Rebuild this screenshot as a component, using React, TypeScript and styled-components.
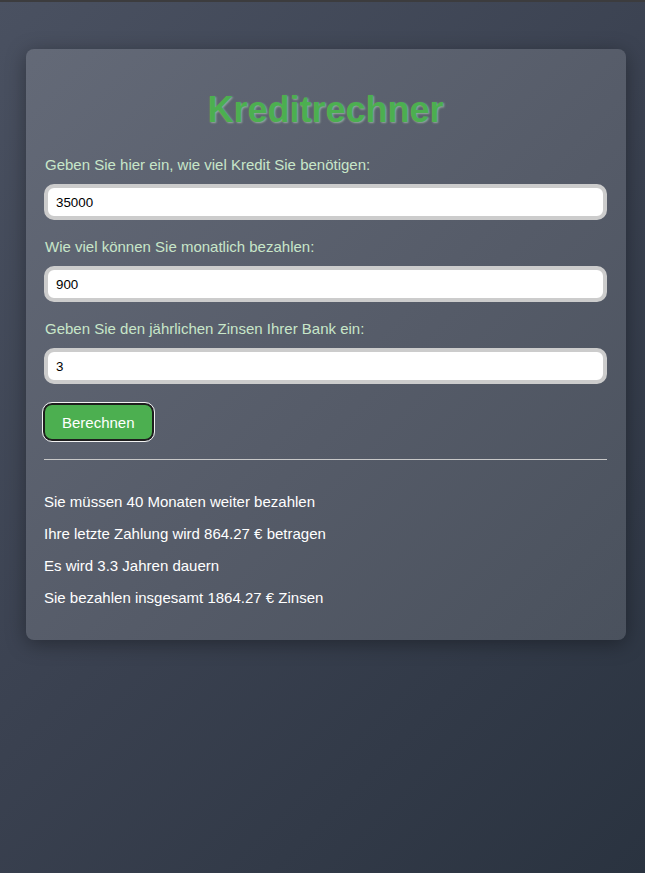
import React from "react";
import styled, { createGlobalStyle } from "styled-components";

const GlobalStyle = createGlobalStyle`
  html, body {
    margin: 0;
    padding: 0;
    height: 100%;
  }
  body {
    font-family: "Liberation Sans", Arial, sans-serif;
    background: linear-gradient(135deg, #4a5161 0%, #3a4150 50%, #2a3340 100%);
    background-attachment: fixed;
    min-height: 873px;
  }
`;

const Page = styled.div`
  box-sizing: border-box;
  min-height: 873px;
  border-top: 2px solid #3c3c3e;
  padding: 47px 19px 40px 26px;
`;

const Card = styled.div`
  box-sizing: border-box;
  width: 600px;
  padding: 0 19px 34px 18px;
  border-radius: 8px;
  background: linear-gradient(135deg, rgba(255, 255, 255, 0.15), rgba(255, 255, 255, 0.13));
  box-shadow: 0 4px 20px rgba(0, 0, 0, 0.35);
  display: flex;
  flex-direction: column;
`;

const Title = styled.h1`
  margin: 41px 0 26px;
  text-align: center;
  font-size: 36px;
  line-height: 40px;
  font-weight: bold;
  color: #4caf50;
  text-shadow: 1px 1px 2px rgba(200, 235, 200, 0.55);
`;

const Field = styled.div`
  display: flex;
  flex-direction: column;
  gap: 11px;
  margin-bottom: 18px;
`;

const Label = styled.label`
  font-size: 15px;
  line-height: 17px;
  color: #c8e6c9;
  padding-left: 1px;
`;

const Input = styled.input`
  box-sizing: border-box;
  width: 100%;
  height: 36px;
  padding: 0 8px;
  border: 4px solid #cccccc;
  border-radius: 10px;
  background: #ffffff;
  font-family: "Liberation Sans", Arial, sans-serif;
  font-size: 13.33px;
  color: #000;
  outline: none;
`;

const Button = styled.button`
  align-self: flex-start;
  box-sizing: border-box;
  height: 38px;
  margin: 1px 0 0 -1px;
  padding: 0 17px;
  border: 2px solid #1e1e1e;
  border-radius: 9px;
  outline: 1px solid #f2f2f2;
  background: #4caf50;
  color: #ffffff;
  font-family: "Liberation Sans", Arial, sans-serif;
  font-size: 15px;
  cursor: pointer;
`;

const Divider = styled.hr`
  width: 100%;
  margin: 18px 0 0;
  border: none;
  border-top: 1px solid #c8c8c8;
`;

const Results = styled.div`
  display: flex;
  flex-direction: column;
  gap: 15px;
  margin-top: 33px;
`;

const Line = styled.p`
  margin: 0;
  font-size: 15px;
  line-height: 17px;
  color: #ffffff;
`;

const fields = [
  { label: "Geben Sie hier ein, wie viel Kredit Sie benötigen:", value: "35000" },
  { label: "Wie viel können Sie monatlich bezahlen:", value: "900" },
  { label: "Geben Sie den jährlichen Zinsen Ihrer Bank ein:", value: "3" },
];

const results = [
  "Sie müssen 40 Monaten weiter bezahlen",
  "Ihre letzte Zahlung wird 864.27 € betragen",
  "Es wird 3.3 Jahren dauern",
  "Sie bezahlen insgesamt 1864.27 € Zinsen",
];

export default function App() {
  return (
    <>
      <GlobalStyle />
      <Page>
        <Card>
          <Title>Kreditrechner</Title>
          {fields.map((f) => (
            <Field key={f.label}>
              <Label>{f.label}</Label>
              <Input type="text" defaultValue={f.value} />
            </Field>
          ))}
          <Button type="button">Berechnen</Button>
          <Divider />
          <Results>
            {results.map((r) => (
              <Line key={r}>{r}</Line>
            ))}
          </Results>
        </Card>
      </Page>
    </>
  );
}
